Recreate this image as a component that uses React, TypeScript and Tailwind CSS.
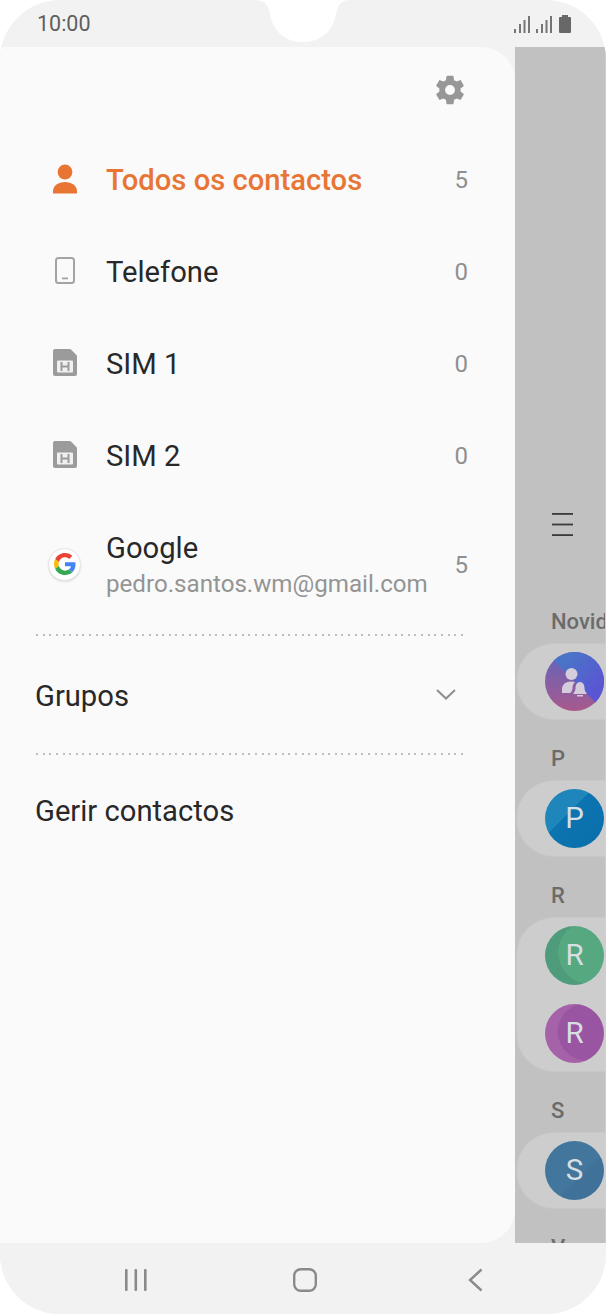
import React from "react";

const font = { fontFamily: "Roboto, sans-serif" };

function Gear() {
  return (
    <svg width="34" height="34" viewBox="0 0 24 24" fill="#979797">
      <path d="M19.43 12.98c.04-.32.07-.64.07-.98s-.03-.66-.07-.98l2.11-1.65c.19-.15.24-.42.12-.64l-2-3.46c-.12-.22-.39-.3-.61-.22l-2.49 1c-.52-.4-1.08-.73-1.69-.98l-.38-2.65A.49.49 0 0 0 14 2h-4c-.25 0-.46.18-.49.42l-.38 2.65c-.61.25-1.17.59-1.69.98l-2.49-1c-.23-.09-.49 0-.61.22l-2 3.46c-.13.22-.07.49.12.64l2.11 1.65c-.04.32-.07.65-.07.98s.03.66.07.98l-2.11 1.65c-.19.15-.24.42-.12.64l2 3.46c.12.22.39.3.61.22l2.49-1c.52.4 1.08.73 1.69.98l.38 2.65c.03.24.24.42.49.42h4c.25 0 .46-.18.49-.42l.38-2.65c.61-.25 1.17-.59 1.69-.98l2.49 1c.23.09.49 0 .61-.22l2-3.46c.12-.22.07-.49-.12-.64l-2.11-1.65zM12 15.5A3.5 3.5 0 1 1 12 8.5a3.5 3.5 0 0 1 0 7z" />
    </svg>
  );
}

function Person() {
  return (
    <svg className="mb-[2px]" width="24" height="30" viewBox="0 0 24 30" fill="#e97535">
      <circle cx="12" cy="8" r="7.4" />
      <path d="M0 29.5v-2.2C0 21.5 5.5 18 12 18s12 3.5 12 9.3v2.2z" />
    </svg>
  );
}

function Phone() {
  return (
    <svg className="mb-[3px]" width="20" height="27" viewBox="0 0 20 27" fill="none">
      <rect x="1" y="1" width="18" height="25" rx="2.5" stroke="#a3a3a3" strokeWidth="2" />
      <rect x="7" y="20.5" width="6" height="1.8" fill="#a3a3a3" />
    </svg>
  );
}

function Sim() {
  return (
    <svg className="mb-[3px]" width="24" height="27" viewBox="0 0 24 27">
      <path d="M2 0h14.5c.6 0 1.1.2 1.5.6l5.4 5.4c.4.4.6.9.6 1.5V25a2 2 0 0 1-2 2H2a2 2 0 0 1-2-2V2a2 2 0 0 1 2-2z" fill="#9b9b9b" />
      <rect x="4" y="11.500" width="16" height="12" rx="1" fill="#f0f0f0" />
      <path d="M8.500 13v9M15.500 13v9M8.500 17.500h7" stroke="#9b9b9b" strokeWidth="2" fill="none" />
    </svg>
  );
}

function GoogleG() {
  return (
    <div className="mb-[2px] mr-px flex h-[33px] w-[33px] shrink-0 items-center justify-center rounded-full border border-[#e6e6e6] bg-white shadow-[0_1px_2px_rgba(0,0,0,0.12)]">
      <svg width="22" height="22" viewBox="0 0 48 48">
        <path fill="#EA4335" d="M24 9.5c3.54 0 6.71 1.22 9.21 3.6l6.85-6.85C35.9 2.38 30.47 0 24 0 14.62 0 6.51 5.38 2.56 13.22l7.98 6.19C12.43 13.72 17.74 9.5 24 9.5z" />
        <path fill="#4285F4" d="M46.98 24.55c0-1.57-.15-3.09-.38-4.55H24v9.02h12.94c-.58 2.96-2.26 5.48-4.78 7.18l7.73 6c4.51-4.18 7.09-10.36 7.09-17.65z" />
        <path fill="#FBBC05" d="M10.53 28.59c-.48-1.45-.76-2.99-.76-4.59s.27-3.14.76-4.59l-7.98-6.19C.92 16.46 0 20.12 0 24c0 3.88.92 7.54 2.56 10.78l7.97-6.19z" />
        <path fill="#34A853" d="M24 48c6.48 0 11.93-2.13 15.89-5.81l-7.73-6c-2.15 1.45-4.92 2.3-8.16 2.3-6.26 0-11.57-4.22-13.47-9.91l-7.98 6.19C6.51 42.62 14.62 48 24 48z" />
      </svg>
    </div>
  );
}

function Divider() {
  return (
    <div className="ml-[36px] h-[2px] w-[428px] bg-[repeating-linear-gradient(90deg,#bebebe_0_2px,transparent_2px_6.64px)]" />
  );
}

function Row({ icon, label, count, active }: { icon: React.ReactNode; label: string; count: string; active?: boolean }) {
  return (
    <div className="flex h-[92px] items-center pl-[49px] pr-[47px]">
      <div className="flex w-[32px] justify-center">{icon}</div>
      <div className={active ? "ml-[25px] flex-1 pt-[2px] text-[29.2px] font-medium text-[#e97535]" : "ml-[25px] flex-1 pt-[2px] text-[29.2px] text-[#282828]"}>
        {label}
      </div>
      <div className="text-[24px] text-[#8f8f8f]">{count}</div>
    </div>
  );
}

function Avatar({ bg, letter, children }: { bg: string; letter?: string; children?: React.ReactNode }) {
  return (
    <div className={`flex h-[59px] w-[59px] shrink-0 items-center justify-center rounded-full text-[29.5px] text-[#d6dfe2] ${bg}`}>
      {letter}
      {children}
    </div>
  );
}

function NewsAvatar() {
  return (
    <svg width="59" height="59" viewBox="0 0 59 59" className="shrink-0">
      <defs>
        <linearGradient id="low" x1="0" y1="0" x2="0" y2="1">
          <stop offset="0.2" stopColor="#6f62b4" />
          <stop offset="1" stopColor="#a8598c" />
        </linearGradient>
        <linearGradient id="up" x1="0" y1="0" x2="1" y2="1">
          <stop offset="0.2" stopColor="#4a74c8" />
          <stop offset="0.8" stopColor="#5a56d2" />
        </linearGradient>
      </defs>
      <circle cx="29.5" cy="29.5" r="29.5" fill="url(#low)" />
      <path d="M8.6 8.6A29.5 29.5 0 0 1 50.4 50.4z" fill="url(#up)" />
      <g fill="#d5ccdc">
        <circle cx="26.5" cy="22" r="6" />
        <path d="M17 41v-4c0-4.5 4-7.5 9-7.5 1.5 0 3 .3 4 .8-2 1.800-2.500 3.700-2.500 6 0 1.800-.8 3.500-2.500 4.700z" />
        <path d="M35 30c3 0 4.500 3 4.500 6 0 2.500 1 4 2 5v1H28.500v-1c1-1 2-2.500 2-5 0-3 1.500-6 4.500-6z" />
        <rect x="32" y="43" width="6" height="1.500" />
      </g>
    </svg>
  );
}

function Section({ label, first, children }: { label: string; first?: boolean; children?: React.ReactNode }) {
  return (
    <div className={first ? "" : "mt-[27px]"}>
      <div className="h-[24px] whitespace-nowrap pl-[36px] text-[22px] font-medium leading-[24px] text-[#6b6b6b]">{label}</div>
      <div className="mt-[9px] ml-px flex w-[130px] flex-col gap-[19px] rounded-l-[38px] border border-[#c7c7c7] bg-[#cdcdcd] py-[8px] pl-[28px]">
        {children}
      </div>
    </div>
  );
}

export default function App() {
  return (
    <div className="h-[1314px] w-[606px] overflow-hidden bg-white" style={font}>
      <div className="relative flex h-[1314px] w-[606px] flex-col overflow-hidden rounded-[60px] bg-[#f2f2f2]">
        {/* status bar */}
        <div className="flex h-[47px] shrink-0 items-center justify-between pl-[37px] pr-[34px]">
          <span className="pt-[2px] text-[21.5px] text-[#5f5f5f]">10:00</span>
          <svg width="58" height="18" viewBox="0 0 58 18">
            <g fill="#757575">
              <rect x="0" y="14" width="2" height="4" />
              <rect x="5" y="9" width="2" height="9" />
              <rect x="9.500" y="5" width="2" height="13" />
              <rect x="14" y="1" width="2" height="17" />
              <rect x="22" y="14" width="2" height="4" />
              <rect x="27" y="9" width="2" height="9" />
              <rect x="31.500" y="5" width="2" height="13" />
              <rect x="36" y="1" width="2" height="17" />
            </g>
            <path d="M48 2V0h6v2h2a1 1 0 0 1 1 1v14a1 1 0 0 1-1 1H46a1 1 0 0 1-1-1V3a1 1 0 0 1 1-1z" fill="#686868" />
          </svg>
        </div>

        {/* notch */}
        <svg className="absolute left-[250px] top-0" width="100" height="46" viewBox="0 0 100 46" fill="#fff">
          <path d="M4 0c10 0 14 4 16 14 3 17 15 28 33 28s30-11 33-28C88 4 92 0 100 0z" />
        </svg>

        {/* main */}
        <div className="flex min-h-0 flex-1">
          <div className="flex w-[515px] shrink-0 flex-col rounded-r-[34px] bg-[#fafafa]">
            <div className="flex h-[87px] justify-end pr-[48px] pt-[26px]">
              <Gear />
            </div>
            <Row icon={<Person />} label="Todos os contactos" count="5" active />
            <Row icon={<Phone />} label="Telefone" count="0" />
            <Row icon={<Sim />} label="SIM 1" count="0" />
            <Row icon={<Sim />} label="SIM 2" count="0" />
            <div className="flex h-[126px] items-center pl-[49px] pr-[47px]">
              <div className="flex w-[32px] justify-center">
                <GoogleG />
              </div>
              <div className="ml-[25px] flex-1 pt-[3px]">
                <div className="text-[29.2px] leading-[35px] text-[#282828]">Google</div>
                <div className="text-[24.15px] leading-[37px] text-[#949494]">pedro.santos.wm@gmail.com</div>
              </div>
              <div className="text-[24px] text-[#8f8f8f]">5</div>
            </div>
            <div className="mt-[6px]">
              <Divider />
            </div>
            <div className="flex h-[117px] items-center justify-between pl-[35px] pr-[59px]">
              <span className="pt-[5px] text-[29.2px] text-[#282828]">Grupos</span>
              <svg width="20" height="11" viewBox="0 0 20 11" fill="none">
                <path d="M1 1l9 8.5L19 1" stroke="#8f8f8f" strokeWidth="2" />
              </svg>
            </div>
            <Divider />
            <div className="flex h-[114px] items-center pl-[35px] text-[29.2px] text-[#282828]">Gerir contactos</div>
          </div>

          {/* right dimmed content */}
          <div className="min-w-0 flex-1 overflow-hidden border-r border-[#cfcfcf] bg-[#c1c1c1] pt-[466px]">
            <svg className="mb-[74px] ml-[36px] block" width="23" height="23" viewBox="0 0 23 23" fill="#3a3a3a">
              <rect x="1" y="0" width="21" height="1.8" />
              <rect x="1" y="10.6" width="21" height="1.8" />
              <rect x="1" y="21.2" width="21" height="1.8" />
            </svg>
            <Section label="Novidades" first>
              <NewsAvatar />
            </Section>
            <Section label="P">
              <Avatar bg="bg-[linear-gradient(135deg,#1f86bb_0%,#1f86bb_40%,#0c74b0_40%,#0a6fac_100%)]" letter="P" />
            </Section>
            <Section label="R">
              <Avatar bg="bg-[radial-gradient(circle_at_75%_45%,#55a880_31px,#4e9c7c_31px)]" letter="R" />
              <Avatar bg="bg-[radial-gradient(circle_at_71%_47%,#9a55a2_29px,#a562a9_29px)]" letter="R" />
            </Section>
            <Section label="S">
              <Avatar bg="bg-[linear-gradient(135deg,#42769c_0%,#42769c_60%,#3f7199_60%,#3f7199_100%)]" letter="S" />
            </Section>
            <Section label="V">
              <div className="h-[59px]" />
            </Section>
          </div>
        </div>

        {/* nav bar */}
        <div className="relative flex h-[71px] shrink-0 items-start bg-[#f2f2f2] pt-[25px]">
          <svg className="ml-[125px] mt-px" width="22" height="22" viewBox="0 0 22 22" fill="#8a8a8a">
            <rect x="0" y="0" width="2.6" height="22" rx="1" />
            <rect x="9.5" y="0" width="2.6" height="22" rx="1" />
            <rect x="19" y="0" width="2.6" height="22" rx="1" />
          </svg>
          <svg className="ml-[146px]" width="24" height="24" viewBox="0 0 24 24" fill="none">
            <rect x="1.2" y="1.2" width="21.6" height="21.6" rx="6.5" stroke="#8a8a8a" strokeWidth="2.4" />
          </svg>
          <svg className="ml-[151px]" width="15" height="24" viewBox="0 0 15 24" fill="none">
            <path d="M13.5 1.5L2 12l11.5 10.5" stroke="#8a8a8a" strokeWidth="2.4" />
          </svg>
        </div>
      </div>
    </div>
  );
}
